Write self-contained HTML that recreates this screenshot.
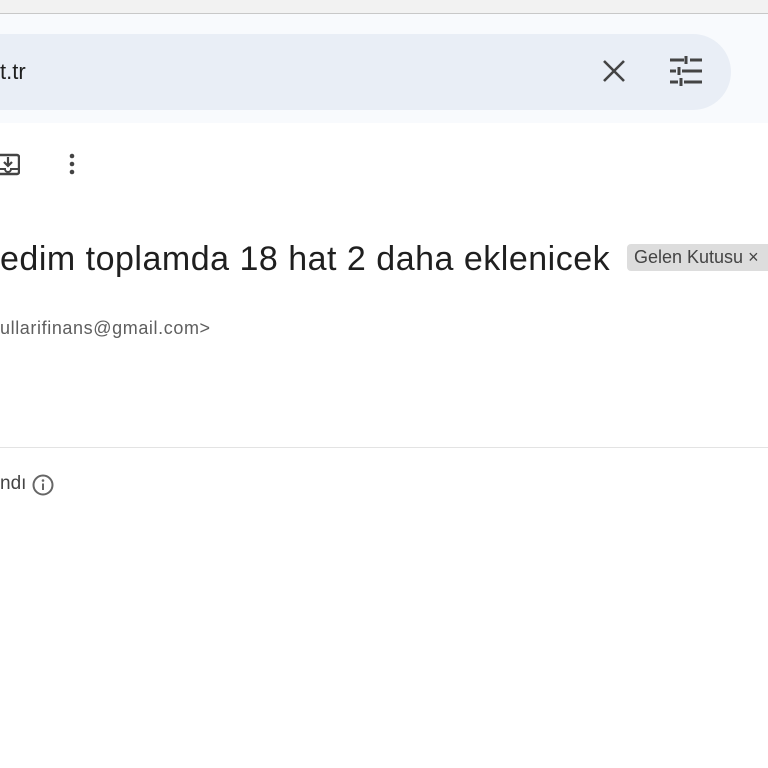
<!DOCTYPE html>
<html><head><meta charset="utf-8"><style>
html,body{margin:0;padding:0;width:768px;height:768px;overflow:hidden;background:#fff;font-family:"Liberation Sans",Arial,sans-serif;}
.top{position:absolute;left:0;top:0;width:768px;height:13px;background:#f2f2f2;border-bottom:1px solid #c8c8c8;}
.hdr{position:absolute;left:0;top:14px;width:768px;height:109px;background:#f8fafd;}
.search{position:absolute;left:-60px;top:34px;width:791px;height:76px;background:#e9eef6;border-radius:38px;}
.q{position:absolute;left:0;top:59px;font-size:22px;color:#1f1f1f;}
.title{position:absolute;left:0;top:240px;font-size:34px;color:#1f1f1f;white-space:nowrap;letter-spacing:0.5px;}
.chip{position:absolute;left:627px;top:244px;width:150px;height:27px;background:#dddddd;border-radius:4px;font-size:18px;color:#444;line-height:27px;padding-left:7px;box-sizing:border-box;white-space:nowrap;}
.from{position:absolute;left:0;top:318px;font-size:18px;color:#5e5e5e;letter-spacing:0.6px;}
.line{position:absolute;left:0;top:447px;width:768px;height:1px;background:#e3e3e3;}
.ndi{position:absolute;left:0;top:473px;font-size:19px;color:#444;}
</style></head><body>
<div class="top"></div>
<div class="hdr"></div>
<div class="search"></div>
<div class="q">t.tr</div>
<svg style="position:absolute;left:600px;top:57px" width="28" height="28" viewBox="0 0 28 28"><path d="M4 4L24 24M24 4L4 24" stroke="#444" stroke-width="2.6"/></svg>
<svg style="position:absolute;left:668px;top:56px" width="36" height="32" viewBox="0 0 36 32"><g stroke="#444" stroke-width="3" fill="none"><path d="M2 4H16M22 4H34M18 0V8"/><path d="M2 15H8M14 15H34M11 11V19"/><path d="M2 26H10M16 26H34M13 22V30"/></g></svg>
<svg style="position:absolute;left:0;top:152px" width="20" height="24" viewBox="0 0 20 24"><path d="M-2 3H17a2 2 0 0 1 2 2V20a2 2 0 0 1-2 2H-2" stroke="#444" stroke-width="2.4" fill="none"/><path d="M8 5V13M4 10L8 14L12 10" stroke="#444" stroke-width="2.2" fill="none"/><path d="M-2 17H5a3 3 0 0 0 6 0H19" stroke="#444" stroke-width="2" fill="none"/></svg>
<svg style="position:absolute;left:67px;top:153px" width="10" height="22" viewBox="0 0 10 22"><circle cx="5" cy="3" r="2.3" fill="#444"/><circle cx="5" cy="11" r="2.3" fill="#444"/><circle cx="5" cy="19" r="2.3" fill="#444"/></svg>
<div class="title">edim toplamda 18 hat 2 daha eklenicek</div>
<div class="chip">Gelen Kutusu ×</div>
<div class="from">ullarifinans@gmail.com&gt;</div>
<div class="line"></div>
<div class="ndi">ndı</div>
<svg style="position:absolute;left:31px;top:473px" width="24" height="24" viewBox="0 0 24 24"><circle cx="12" cy="12" r="9.5" stroke="#666" stroke-width="2" fill="none"/><path d="M12 10.5V17" stroke="#666" stroke-width="2"/><circle cx="12" cy="7.5" r="1.3" fill="#666"/></svg>
</body></html>
